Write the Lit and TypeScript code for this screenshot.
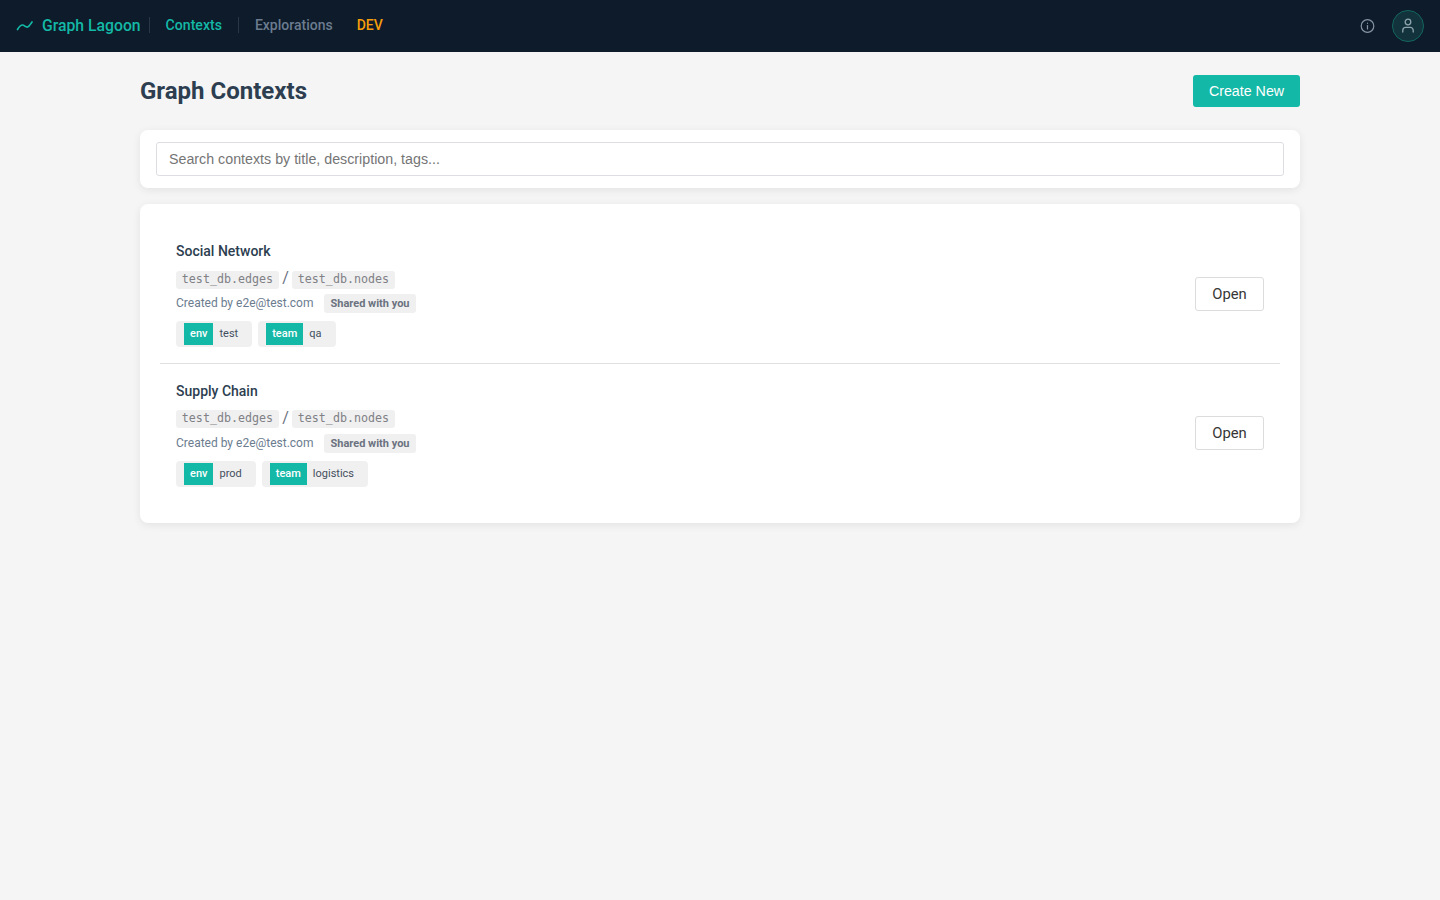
import { LitElement, html, css } from "lit";
import { customElement } from "lit/decorators.js";

const items = [
  { title: "Social Network", tags: [["env", "test"], ["team", "qa"]] },
  { title: "Supply Chain", tags: [["env", "prod"], ["team", "logistics"]] },
];

@customElement("app-root")
export class AppRoot extends LitElement {
  static styles = css`
    :host { display: block; min-height: 900px; background: #f5f5f5; font-family: Roboto, sans-serif; color: #2c3e50; }
    * { box-sizing: border-box; }
    nav { height: 52px; background: #0d1b2a; display: flex; align-items: center; padding: 0 16px; font-size: 14px; font-weight: 500; }
    .left { display: flex; align-items: center; margin-bottom: 2px; }
    .brand { display: flex; align-items: center; gap: 8px; color: #14b8a6; font-size: 15.75px; padding-right: 8px; border-right: 1px solid #2a3646; height: 16px; }
    .brand svg { display: block; margin-top: 1px; }
    .link { display: flex; align-items: center; height: 16px; line-height: 16px; }
    .ctx { color: #14b8a6; margin-left: 16px; padding-right: 16px; border-right: 1px solid #2a3646; font-size: 14.1px; }
    .exp { color: #6b7c8f; margin-left: 16px; }
    .dev { color: #f59e0b; margin-left: 24px; }
    .spacer { flex: 1; }
    .info { display: block; margin-right: 17px; margin-bottom: 1px; }
    .avatar { width: 32px; height: 32px; border-radius: 50%; border: 1px solid #14665f; background: #12323c; display: flex; align-items: center; justify-content: center; }
    main { width: 1160px; margin: 0 auto; padding-top: 23px; }
    header { display: flex; justify-content: space-between; align-items: center; height: 32px; margin-bottom: 23px; }
    h1 { margin: 0; font-size: 24px; font-weight: 700; color: #2c3e50; }
    .create { height: 32px; width: 107px; background: #14b8a6; color: #fff; border: none; border-radius: 3px; font: 14.25px "Liberation Sans", sans-serif; padding: 0; }
    .card { background: #fff; border-radius: 8px; box-shadow: 0 2px 8px rgba(0,0,0,.08); }
    .search { padding: 12px 16px; margin-bottom: 16px; }
    .input { height: 34px; border: 1px solid #dddde3; border-radius: 3px; padding: 0 12px; font: 14.25px/32px "Liberation Sans", sans-serif; color: #757575; }
    .list { padding: 20px; }
    .item { display: flex; align-items: center; justify-content: space-between; padding: 16px; }
    .item:first-child { padding-bottom: 16.3px; }
    .item + .item { border-top: 1px solid #e0e0e0; padding-top: 15.3px; }
    .title { font-size: 14px; font-weight: 500; line-height: 22px; color: #2c3e50; margin-bottom: 8.6px; height: 22px; }
    .tables { display: flex; align-items: center; color: #6b7280; height: 18px; margin-bottom: 5.5px; }
    .tables span { font-size: 16px; line-height: 14px; width: 13px; text-align: center; margin-top: -3px; }
    code { font: 11.68px/16.500px "DejaVu Sans Mono", monospace; color: #808086; background: #f0f0f0; border-radius: 3px; padding: 0 5.8px; height: 18px; }
    .meta { display: flex; align-items: center; gap: 11px; font-size: 12px; color: #6b7c8f; line-height: 19px; height: 19px; margin-bottom: 7.9px; }
    .shared { font-size: 11px; font-weight: 700; color: #6b7280; background: #f0f0f0; border-radius: 3px; padding: 0 6px; }
    .tags { display: flex; gap: 6px; }
    .tag { display: flex; align-items: center; background: #f0f0f0; border-radius: 4px; padding: 2px 14px 2px 8px; font-size: 11px; color: #444f5e; height: 26px; }
    .k { background: #14b8a6; color: #fff; font-weight: 500; height: 22px; line-height: 22px; padding: 0 6px; margin-right: 6px; }
    .open { width: 69px; height: 34px; margin-top: 0.4px; background: #fff; border: 1px solid #dcdcdc; border-radius: 3px; font: 14.8px Roboto, sans-serif; color: #363636; padding: 0; }
  `;

  render() {
    return html`
      <nav>
        <div class="left">
          <div class="brand">
            <svg width="18" height="18" viewBox="0 0 18 18" fill="none" stroke="#14b8a6" stroke-width="1.7" stroke-linecap="round" stroke-linejoin="round"><path d="M1.500 12.500 C3 10 4.500 8 6.500 8 S9.500 10.500 11.500 10 S14.500 7 16 5"/></svg>
            <span>Graph Lagoon</span>
          </div>
          <span class="link ctx">Contexts</span>
          <span class="link exp">Explorations</span>
          <span class="link dev">DEV</span>
        </div>
        <div class="spacer"></div>
        <svg class="info" width="16" height="16" viewBox="0 0 16 16" fill="none" stroke="#8595a5" stroke-width="1.200" stroke-linecap="round"><circle cx="8.500" cy="8" r="6.300"/><path d="M8.500 7.500V11"/><path d="M8.500 5.200v.1"/></svg>
        <div class="avatar">
          <svg width="16" height="16" viewBox="0 0 16 16" fill="none" stroke="#8fa5ad" stroke-width="1.300" stroke-linecap="round"><circle cx="8" cy="4" r="2.800"/><path d="M2.800 14v-1.700a3 3 0 0 1 3-3h4.400a3 3 0 0 1 3 3v1.700"/></svg>
        </div>
      </nav>
      <main>
        <header>
          <h1>Graph Contexts</h1>
          <button class="create">Create New</button>
        </header>
        <div class="card search"><div class="input">Search contexts by title, description, tags...</div></div>
        <div class="card list">
          ${items.map(
            (it) => html`
              <div class="item">
                <div>
                  <div class="title">${it.title}</div>
                  <div class="tables"><code>test_db.edges</code><span>/</span><code>test_db.nodes</code></div>
                  <div class="meta"><span>Created by e2e@test.com</span><span class="shared">Shared with you</span></div>
                  <div class="tags">
                    ${it.tags.map(([k, v]) => html`<span class="tag"><span class="k">${k}</span><span>${v}</span></span>`)}
                  </div>
                </div>
                <button class="open">Open</button>
              </div>
            `
          )}
        </div>
      </main>
    `;
  }
}
